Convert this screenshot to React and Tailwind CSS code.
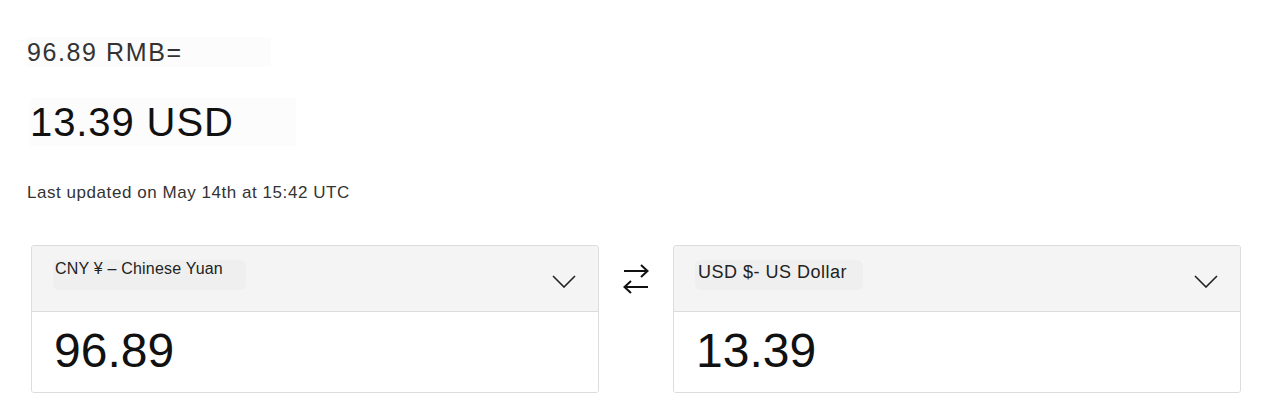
import React from "react";

function Chevron() {
  return (
    <svg width="24" height="13" viewBox="0 0 24 13" fill="none">
      <path d="M1 1 L12 12 L23 1" stroke="#222" strokeWidth="1.6" />
    </svg>
  );
}

function SwapIcon() {
  return (
    <svg width="26" height="30" viewBox="0 0 26 30" fill="none" stroke="#111" strokeWidth="2">
      <path d="M1 7 H24" />
      <path d="M18 1 L24.5 7 L18 13" />
      <path d="M25 23 H2" />
      <path d="M8 17 L1.5 23 L8 29" />
    </svg>
  );
}

function CurrencyBox({ label, labelClass, labelBg, value }) {
  return (
    <div className="w-[568px] border border-[#dcdcdc] rounded-[3px] overflow-hidden">
      {/* HEADER */}
      <div className="h-[66px] bg-[#f4f4f4] border-b border-[#dcdcdc] flex justify-between">
        <div className={"mt-[14px] ml-[21px] h-[30px] rounded-[6px] bg-[#efefef] pl-[2px] " + labelBg}>
          <span className={"block text-[#222] " + labelClass}>{label}</span>
        </div>
        <div className="flex items-center pr-[22px] pt-[6px]">
          <Chevron />
        </div>
      </div>

      {/* VALUE */}
      <div className="h-[80px] bg-white pl-[22px] pt-[15px]">
        <div className="text-[48px] leading-[48px] text-[#111]">{value}</div>
      </div>
    </div>
  );
}

export default function App() {
  return (
    <div
      className="w-[1270px] h-[420px] bg-white pl-[27px] pr-[29px] pt-[37px]"
      style={{ fontFamily: '"Liberation Sans", Arial, sans-serif' }}
    >
      <div className="w-[244px] bg-[#fcfcfc] text-[25px] leading-[30px] tracking-[1.6px] text-[#333]">
        96.89 RMB=
      </div>

      <div className="mt-[31px] ml-[3px] w-[266px] bg-[#fcfcfc] text-[40px] leading-[48px] tracking-[0.9px] text-[#111]">
        13.39 USD
      </div>

      <div className="mt-[37px] text-[17px] leading-[20px] tracking-[0.55px] text-[#333]">
        Last updated on May 14th at 15:42 UTC
      </div>

      <div className="mt-[42px] ml-[4px] flex">
        <CurrencyBox
          label="CNY ¥ – Chinese Yuan"
          labelClass="text-[16px] leading-[16px] pt-[1px] tracking-[0.2px]"
          labelBg="w-[193px]"
          value="96.89"
        />
        <div className="w-[74px] h-[67px] flex items-center justify-center">
          <SwapIcon />
        </div>
        <CurrencyBox
          label="USD $- US Dollar"
          labelClass="text-[18px] leading-[18px] tracking-[0.5px] pt-[3px] pl-[1px]"
          labelBg="w-[168px]"
          value="13.39"
        />
      </div>
    </div>
  );
}
